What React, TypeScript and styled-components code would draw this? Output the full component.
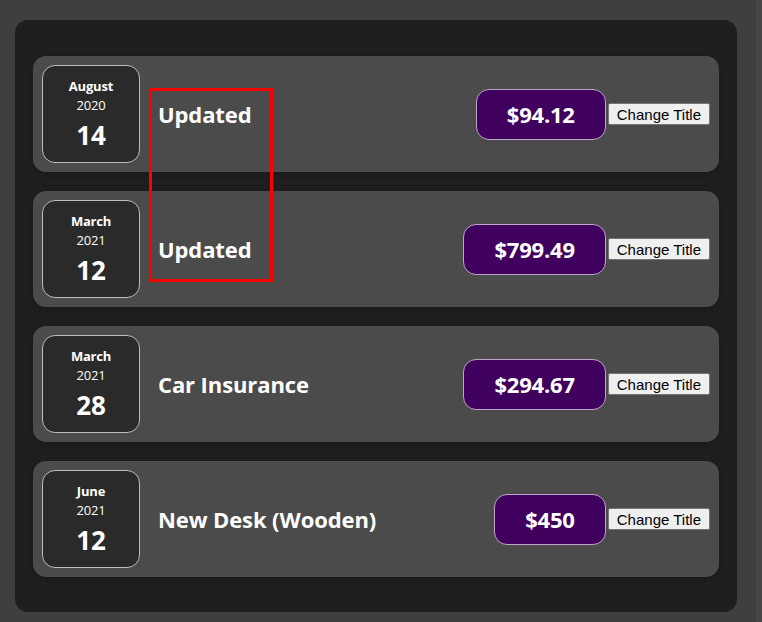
import React from "react";
import styled, { createGlobalStyle } from "styled-components";

const GlobalStyle = createGlobalStyle`
  html, body {
    margin: 0;
    min-height: 100%;
  }
  body {
    background-color: #3f3f3f;
    font-family: "Open Sans", Lato, sans-serif;
    box-shadow: inset -6px 0 0 #474747;
    min-height: 622px;
  }
`;

const Page = styled.div`
  position: relative;
  padding: 20px 0 10px 15px;
`;

const Expenses = styled.div`
  width: 722px;
  box-sizing: border-box;
  padding: 18px;
  background-color: #1f1f1f;
  border-radius: 13px;
`;

const Item = styled.div`
  display: flex;
  align-items: center;
  justify-content: space-between;
  padding: 9px;
  margin: 19px 0;
  border-radius: 13px;
  background-color: #4b4b4b;
  box-shadow: 0 2px 9px rgba(0, 0, 0, 0.25);

  &:first-child {
    margin-top: 18px;
  }
  &:last-child {
    margin-bottom: 17px;
  }
`;

const DateBox = styled.div`
  display: flex;
  flex-direction: column;
  align-items: center;
  justify-content: center;
  box-sizing: border-box;
  width: 98px;
  height: 98px;
  padding-top: 4px;
  flex-shrink: 0;
  border: 1px solid #bcbcbc;
  background-color: #2a2a2a;
  color: white;
  border-radius: 13px;
`;

const Month = styled.div`
  font-size: 13px;
  font-weight: bold;
  letter-spacing: -0.2px;
  line-height: 19px;
`;

const Year = styled.div`
  font-size: 13px;
  letter-spacing: -0.2px;
  line-height: 19px;
`;

const Day = styled.div`
  font-size: 26px;
  font-weight: bold;
  line-height: 41px;
`;

const Description = styled.div`
  display: flex;
  align-items: center;
  flex: 1;
`;

const Title = styled.h2`
  flex: 1;
  margin: 0 18px;
  font-size: 22px;
  letter-spacing: -0.1px;
  color: white;
`;

const Price = styled.div`
  font-size: 22px;
  line-height: 29px;
  font-weight: bold;
  letter-spacing: -0.2px;
  color: white;
  background-color: #40005d;
  border: 1px solid #bfa6c9;
  padding: 10px 30px;
  border-radius: 13px;
`;

const Button = styled.button`
  margin-left: 2px;
  font-family: Arial, "Liberation Sans", sans-serif;
  font-size: 15px;
  padding: 1px 8px;
  height: 22px;
  background-color: #efefef;
  color: black;
  border: 1px solid #767676;
  border-radius: 2px;
`;

const Highlight = styled.div`
  position: absolute;
  left: 149px;
  top: 88px;
  width: 118px;
  height: 188px;
  border: 3px solid #ff0000;
  pointer-events: none;
`;

type Expense = {
  month: string;
  year: string;
  day: string;
  title: string;
  price: string;
};

const expenses: Expense[] = [
  { month: "August", year: "2020", day: "14", title: "Updated", price: "$94.12" },
  { month: "March", year: "2021", day: "12", title: "Updated", price: "$799.49" },
  { month: "March", year: "2021", day: "28", title: "Car Insurance", price: "$294.67" },
  { month: "June", year: "2021", day: "12", title: "New Desk (Wooden)", price: "$450" },
];

const App: React.FC = () => {
  return (
    <>
      <GlobalStyle />
      <Page>
        <Expenses>
          {expenses.map((e, i) => (
            <Item key={i}>
              <DateBox>
                <Month>{e.month}</Month>
                <Year>{e.year}</Year>
                <Day>{e.day}</Day>
              </DateBox>
              <Description>
                <Title>{e.title}</Title>
                <Price>{e.price}</Price>
              </Description>
              <Button>Change Title</Button>
            </Item>
          ))}
        </Expenses>
        <Highlight />
      </Page>
    </>
  );
};

export default App;
